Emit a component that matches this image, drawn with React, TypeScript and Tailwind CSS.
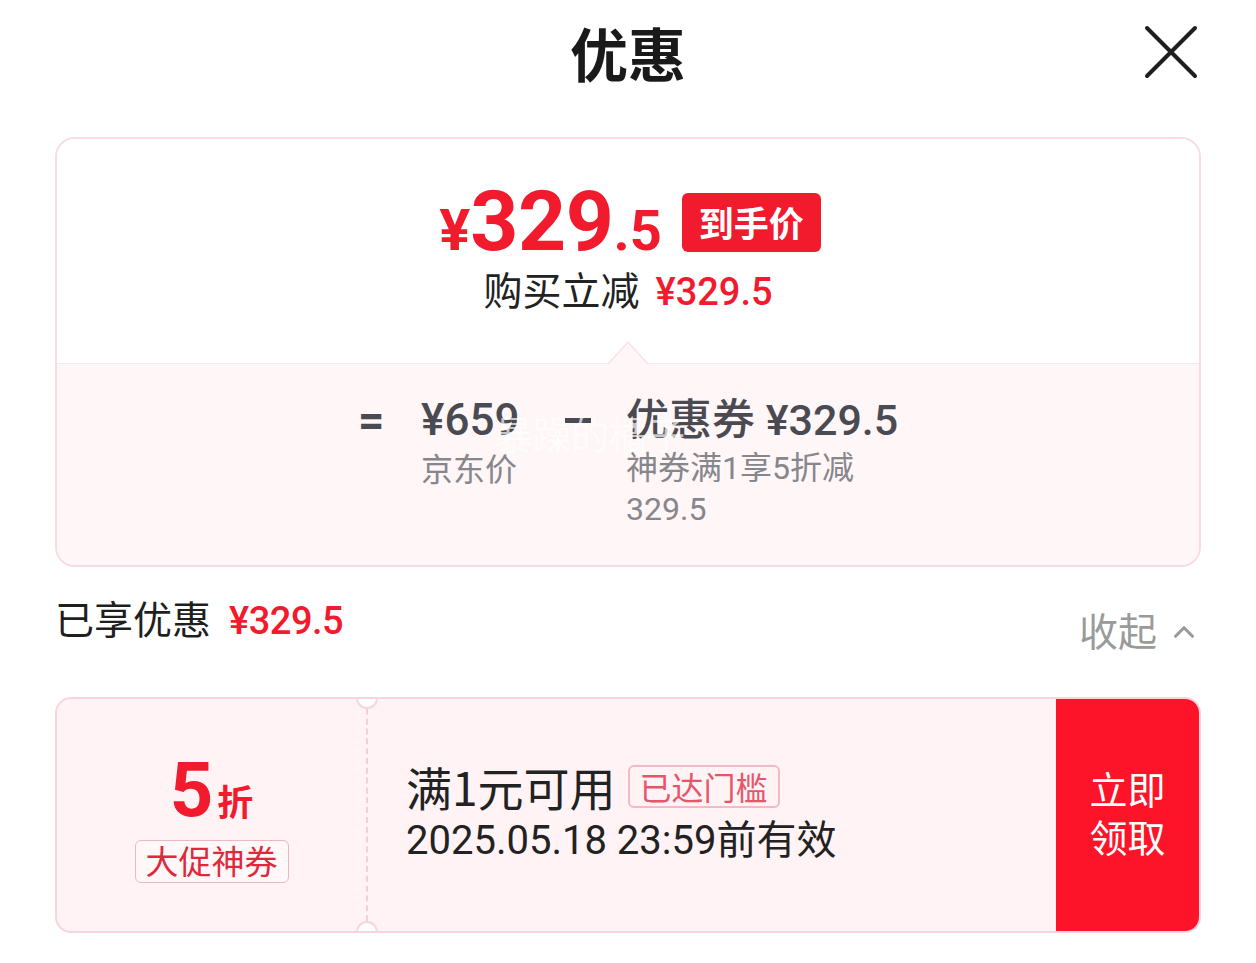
import { ChevronUp } from 'lucide-react'

const font = "font-['Roboto','Noto_Sans_CJK_SC',sans-serif]"

export default function App() {
    return (
        <div className={`w-[1256px] h-[963px] bg-white text-[#1f1f1f] ${font} overflow-hidden`}>
            {/* Header */}
            <div className="grid grid-cols-[1fr_auto_1fr] items-center h-[104px] px-[55px]">
                <div />
                <div className="text-[58px] font-bold leading-none text-[#1a1a1a] font-['Noto_Sans_CJK_SC',sans-serif]">优惠</div>
                <div className="flex justify-end pr-[3px]">
                    <svg width="54" height="54" viewBox="0 0 54 54" fill="none" stroke="#1f1f1f" strokeWidth="4" strokeLinecap="round">
                        <path d="M3 3 L51 51 M51 3 L3 51" />
                    </svg>
                </div>
            </div>

            <div className="px-[55px] pt-[33px]">
                {/* Price summary card */}
                <div className="rounded-[20px] border-2 border-[#f8dce1] overflow-hidden">
                    <div className="h-[224px] flex flex-col items-center justify-center bg-white pb-[4px]">
                        <div className="flex items-center h-[70px] pl-[4px]">
                            <div className="flex items-baseline text-[#f21a2d] font-bold leading-none">
                                <span className="text-[58px]">¥</span>
                                <span className="text-[84px] tracking-[-0.5px]">329</span>
                                <span className="text-[56px]">.5</span>
                            </div>
                            <div className="ml-[20px] h-[59px] px-[17px] rounded-[6px] bg-[#f21a2d] text-white text-[35px] font-bold flex items-center font-['Noto_Sans_CJK_SC',sans-serif]">到手价</div>
                        </div>
                        <div className="mt-[12px] flex items-baseline leading-none">
                            <span className="text-[39px] font-['Noto_Sans_CJK_SC',sans-serif] text-[#222]">购买立减</span>
                            <span className="ml-[16px] text-[38px] font-medium text-[#f21a2d]">¥329.5</span>
                        </div>
                    </div>
                    <div className="relative border-t border-[#fbe6ea] bg-[#fff6f7] h-[202px]">
                        <svg className="absolute left-[551px] -top-[24px]" width="40" height="25" viewBox="0 0 40 25">
                            <path d="M0 24 L20 2 L40 24 Z" fill="#fff6f7" />
                            <path d="M0 24 L20 2 L40 24" fill="none" stroke="#fbe0e5" strokeWidth="1.5" />
                        </svg>
                        <div className="flex justify-center pt-[28px] pl-[6px] text-[#4a4a52]">
                            <div className="text-[46px] font-bold leading-[56px] w-[63px]">=</div>
                            <div className="w-[142px]">
                                <div className="text-[44px] font-medium leading-[56px]">¥659</div>
                                <div className="text-[32px] leading-[38px] text-[#86868c] font-['Noto_Sans_CJK_SC',sans-serif]">京东价</div>
                            </div>
                            <div className="w-[63px] pt-[26px] pl-[2px]">
                                <div className="w-[26px] h-[5px] bg-[#4a4a52]" />
                            </div>
                            <div className="w-[278px]">
                                <div className="text-[43px] font-medium leading-[56px] whitespace-nowrap">优惠券 ¥329.5</div>
                                <div className="text-[32px] leading-[41px] text-[#86868c] max-w-[250px]">神券满1享5折减329.5</div>
                            </div>
                        </div>
                        <div className="absolute left-[438px] top-[40px] text-[38px] text-white/70 font-['Noto_Sans_CJK_SC',sans-serif] pointer-events-none">暴躁的橘子</div>
                    </div>
                </div>

                {/* Enjoyed discount row */}
                <div className="flex items-center justify-between h-[108px] pt-[2px]">
                    <div className="flex items-baseline pb-[6px]">
                        <span className="text-[39px] text-[#1f1f1f] font-['Noto_Sans_CJK_SC',sans-serif]">已享优惠</span>
                        <span className="ml-[18px] text-[38px] font-medium text-[#f21a2d] tracking-[-0.5px]">¥329.5</span>
                    </div>
                    <div className="flex items-center text-[#9a9a9a] pt-[14px]">
                        <span className="text-[39px] font-['Noto_Sans_CJK_SC',sans-serif]">收起</span>
                        <ChevronUp className="ml-[10px] w-[34px] h-[34px] mt-[6px]" strokeWidth={2.2} />
                    </div>
                </div>

                {/* Coupon */}
                <div className="mt-[22px] flex h-[236px] rounded-[16px] border-2 border-[#f6d6dc] bg-[#fff3f5] overflow-hidden">
                    <div className="w-[309px] flex flex-col items-center justify-center pt-[4px]">
                        <div className="flex items-baseline text-[#f21a2d] font-bold leading-none">
                            <span className="text-[76px]">5</span>
                            <span className="text-[36px] ml-[4px] font-['Noto_Sans_CJK_SC',sans-serif]">折</span>
                        </div>
                        <div className="mt-[12px] h-[43px] px-[10px] rounded-[6px] border border-[#e9b9c1] bg-[#fff7f8] text-[33px] text-[#e0283c] flex items-center font-['Noto_Sans_CJK_SC',sans-serif]">大促神券</div>
                    </div>
                    <div className="relative w-0 border-l-2 border-dashed border-[#f1cfd5]">
                        <div className="absolute -left-[12px] -top-[12px] w-[22px] h-[22px] rounded-full bg-white border-2 border-[#f6d6dc]" />
                        <div className="absolute -left-[12px] -bottom-[12px] w-[22px] h-[22px] rounded-full bg-white border-2 border-[#f6d6dc]" />
                    </div>
                    <div className="flex-1 flex flex-col justify-center pl-[38px] pb-[6px]">
                        <div className="flex items-center">
                            <span className="text-[46px] leading-[56px] text-[#222] font-['Noto_Sans_CJK_SC',sans-serif]">满1元可用</span>
                            <span className="ml-[12px] h-[43px] px-[10px] rounded-[6px] border-2 border-[#f2bac3] text-[32px] text-[#e6566b] flex items-center font-['Noto_Sans_CJK_SC',sans-serif]">已达门槛</span>
                        </div>
                        <div className="mt-[2px] text-[40px] leading-[50px] text-[#222]">2025.05.18 23:59前有效</div>
                    </div>
                    <div className="w-[143px] bg-[#fe1428] flex items-center justify-center">
                        <div className="text-white text-[38px] leading-[48px] text-center font-['Noto_Sans_CJK_SC',sans-serif] pb-[6px]">立即<br />领取</div>
                    </div>
                </div>
            </div>
        </div>
    )
}
